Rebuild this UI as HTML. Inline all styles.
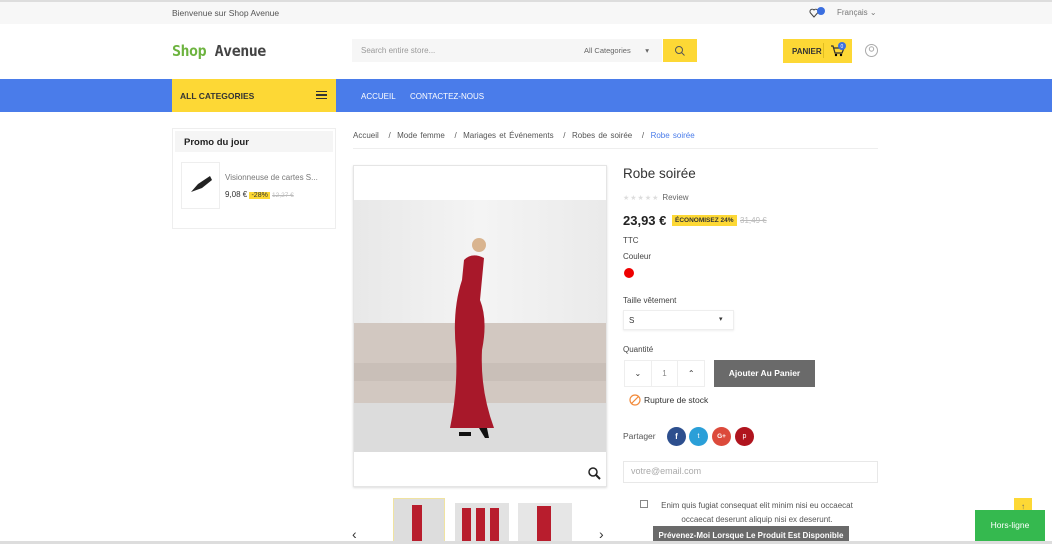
<!DOCTYPE html>
<html><head><meta charset="utf-8"><style>
*{margin:0;padding:0;box-sizing:border-box}
body{width:1052px;height:544px;overflow:hidden;background:#fff;font-family:"Liberation Sans",sans-serif;color:#333;position:relative;font-size:9px}
.a{position:absolute}
</style></head><body>
<div class="a" style="left:0;top:0;width:1052px;height:2px;background:#ddd"></div>
<div class="a" style="left:0;top:2px;width:1052px;height:22px;background:#f7f7f7"></div>
<div class="a" style="left:172px;top:8px;font-size:8.5px;color:#555">Bienvenue sur Shop Avenue</div>
<svg class="a" style="left:809px;top:7px" width="18" height="12"><path d="M5 10 L1.5 6 A2.2 2.2 0 0 1 5 3 A2.2 2.2 0 0 1 8.5 6Z" fill="none" stroke="#444" stroke-width="1"/><circle cx="12" cy="4" r="4" fill="#3b6fe0"/></svg>
<div class="a" style="left:837px;top:8px;font-size:8px;color:#777">Français ⌄</div>
<div class="a" style="left:172px;top:42px;font-size:15px;font-weight:bold;font-family:'DejaVu Sans Mono',monospace;letter-spacing:-0.5px"><span style="color:#6cb33e">Shop</span> <span style="color:#444">Avenue</span></div>
<div class="a" style="left:352px;top:39px;width:310px;height:23px;background:#f6f6f6"></div>
<div class="a" style="left:361px;top:46px;font-size:8px;color:#999">Search entire store...</div>
<div class="a" style="left:584px;top:46px;font-size:7.5px;color:#666">All Categories &nbsp;&nbsp;&nbsp;&nbsp;&nbsp; ▾</div>
<div class="a" style="left:663px;top:39px;width:34px;height:23px;background:#fdd835"></div>
<svg class="a" style="left:674px;top:45px" width="12" height="12"><circle cx="5" cy="5" r="3.5" fill="none" stroke="#555"/><path d="M7.5 7.5 L10.5 10.5" stroke="#555"/></svg>
<div class="a" style="left:783px;top:39px;width:69px;height:24px;background:#fdd835"></div>
<div class="a" style="left:792px;top:47px;font-size:8px;font-weight:bold;color:#333">PANIER</div>
<div class="a" style="left:823px;top:43px;width:1px;height:15px;background:#e0bd20"></div>
<svg class="a" style="left:829px;top:41px" width="20" height="18"><path d="M2 5h2l2 7h7l2-5H5" fill="none" stroke="#333" stroke-width="1.2"/><circle cx="7" cy="14" r="1.2"/><circle cx="12" cy="14" r="1.2"/><circle cx="13" cy="5" r="4" fill="#3b6fe0"/><text x="11.5" y="7" font-size="5" fill="#fff">0</text></svg>
<svg class="a" style="left:864px;top:43px" width="15" height="15"><circle cx="7.5" cy="7.5" r="6" fill="none" stroke="#aaa"/><circle cx="7.5" cy="6" r="2.2" fill="none" stroke="#aaa"/></svg>
<div class="a" style="left:0;top:79px;width:1052px;height:33px;background:#4a7cea"></div>
<div class="a" style="left:172px;top:79px;width:164px;height:33px;background:#fdd835"></div>
<div class="a" style="left:180px;top:91px;font-size:8.5px;font-weight:bold;color:#333">ALL CATEGORIES</div>
<div class="a" style="left:316px;top:91px;width:11px;height:8px;border-top:1.5px solid #333;border-bottom:1.5px solid #333"><div style="margin-top:2px;height:1.5px;background:#333"></div></div>
<div class="a" style="left:361px;top:92px;font-size:8px;color:#fff">ACCUEIL</div>
<div class="a" style="left:410px;top:92px;font-size:8px;color:#fff">CONTACTEZ-NOUS</div>
<div class="a" style="left:172px;top:128px;width:164px;height:101px;border:1px solid #eee"></div>
<div class="a" style="left:175px;top:131px;width:158px;height:21px;background:#f5f5f5"></div>
<div class="a" style="left:184px;top:137px;font-size:9.5px;font-weight:bold;color:#222">Promo du jour</div>
<div class="a" style="left:181px;top:162px;width:39px;height:47px;border:1px solid #eee"></div>
<svg class="a" style="left:188px;top:172px" width="26" height="24"><path d="M3 20 L10 12 L22 4 L24 8 L14 16 Z" fill="#222"/></svg>
<div class="a" style="left:225px;top:173px;font-size:8px;color:#777">Visionneuse de cartes S...</div>
<div class="a" style="left:225px;top:190px;font-size:8px;color:#333">9,08 € <span style="background:#fdd835;padding:0 2px;font-size:7px">-28%</span> <span style="color:#bbb;font-size:6.5px;text-decoration:line-through">12,27 €</span></div>
<div class="a" style="left:353px;top:131px;font-size:8px;color:#555;word-spacing:1px">Accueil &nbsp; / &nbsp;Mode femme &nbsp; / &nbsp;Mariages et Événements &nbsp; / &nbsp;Robes de soirée &nbsp; / &nbsp;<span style="color:#4a7cea">Robe soirée</span></div>
<div class="a" style="left:353px;top:148px;width:525px;height:1px;background:#eee"></div>
<div class="a" style="left:353px;top:165px;width:254px;height:322px;border:1px solid #e5e5e5;box-shadow:0 1px 2px #ddd"></div>
<svg class="a" style="left:354px;top:200px" width="252" height="252">
<defs><linearGradient id="w" x1="0" x2="1"><stop offset="0" stop-color="#e8e8e8"/><stop offset=".5" stop-color="#f4f4f4"/><stop offset="1" stop-color="#eaeaea"/></linearGradient></defs>
<rect width="252" height="252" fill="url(#w)"/>
<rect x="0" y="123" width="252" height="80" fill="#d2c8c1"/>
<rect x="0" y="163" width="252" height="18" fill="#c9bfb8"/>
<rect x="0" y="203" width="252" height="49" fill="#dcdcdc"/>
<path d="M110 60 Q118 52 130 58 L126 100 Q134 120 128 150 Q126 190 140 228 L96 228 Q104 190 102 150 Q98 110 108 80 Z" fill="#a8182a"/>
<circle cx="125" cy="45" r="7" fill="#d9b48f"/>
<path d="M105 232 h12 v4 h-12z M125 228 h8 l2 10 h-4z" fill="#111"/>
</svg>
<svg class="a" style="left:587px;top:466px" width="14" height="14"><circle cx="6" cy="6" r="4" fill="none" stroke="#222" stroke-width="1.5"/><path d="M9 9 L13 13" stroke="#222" stroke-width="2"/></svg>
<div class="a" style="left:393px;top:498px;width:52px;height:46px;border:1px solid #f0e3a0;background:#ddd"></div>
<div class="a" style="left:455px;top:503px;width:54px;height:41px;background:#e2e2e2"></div>
<div class="a" style="left:518px;top:503px;width:54px;height:41px;background:#e6e6e6"></div>
<div class="a" style="left:412px;top:505px;width:10px;height:39px;background:#b81d2d"></div>
<div class="a" style="left:462px;top:508px;width:40px;height:36px;background:repeating-linear-gradient(90deg,#b81d2d 0 9px,#e2e2e2 9px 14px)"></div>
<div class="a" style="left:537px;top:506px;width:14px;height:38px;background:#b81d2d"></div>
<div class="a" style="left:352px;top:526px;font-size:14px;color:#333">‹</div>
<div class="a" style="left:599px;top:526px;font-size:14px;color:#333">›</div>
<div class="a" style="left:623px;top:166px;font-size:13.5px;color:#333">Robe soirée</div>
<div class="a" style="left:623px;top:193px;font-size:7px;color:#ddd;letter-spacing:1px">★★★★★ <span style="color:#666;font-size:8px;letter-spacing:0">Review</span></div>
<div class="a" style="left:623px;top:213px;font-size:13px;font-weight:bold;color:#222">23,93 €</div>
<div class="a" style="left:672px;top:215px;font-size:6.5px;font-weight:bold;background:#fdd835;padding:2px 3px">ÉCONOMISEZ 24%</div>
<div class="a" style="left:740px;top:216px;font-size:8px;color:#bbb;text-decoration:line-through">31,49 €</div>
<div class="a" style="left:623px;top:236px;font-size:8px;color:#444">TTC</div>
<div class="a" style="left:623px;top:252px;font-size:8px;color:#444">Couleur</div>
<div class="a" style="left:624px;top:268px;width:10px;height:10px;border-radius:50%;background:#e00"></div>
<div class="a" style="left:623px;top:296px;font-size:8px;color:#444">Taille vêtement</div>
<div class="a" style="left:623px;top:310px;width:111px;height:20px;border:1px solid #eee;box-shadow:0 1px 2px #eee"></div>
<div class="a" style="left:629px;top:316px;font-size:8px">S</div>
<div class="a" style="left:719px;top:315px;font-size:7px">▾</div>
<div class="a" style="left:623px;top:345px;font-size:8px;color:#444">Quantité</div>
<div class="a" style="left:624px;top:360px;width:81px;height:27px;border:1px solid #eee;display:flex"><div style="flex:1;border-right:1px solid #eee;text-align:center;line-height:26px;font-size:8px">⌄</div><div style="flex:1;border-right:1px solid #eee;text-align:center;line-height:26px;font-size:8px;color:#888">1</div><div style="flex:1;text-align:center;line-height:26px;font-size:8px">⌃</div></div>
<div class="a" style="left:714px;top:360px;width:101px;height:27px;background:#6a6a6a;color:#fff;font-size:8.5px;font-weight:bold;text-align:center;line-height:27px">Ajouter Au Panier</div>
<svg class="a" style="left:629px;top:394px" width="12" height="12"><circle cx="6" cy="6" r="5" fill="none" stroke="#f28a3a" stroke-width="1.2"/><path d="M2.5 9.5 L9.5 2.5" stroke="#f28a3a" stroke-width="1.2"/></svg>
<div class="a" style="left:644px;top:395px;font-size:8.5px;color:#333">Rupture de stock</div>
<div class="a" style="left:623px;top:431px;font-size:8.5px;color:#555">Partager</div>
<div class="a" style="left:667px;top:427px;width:19px;height:19px;border-radius:50%;background:#2d4f8e;color:#fff;font-size:8px;text-align:center;line-height:19px;font-weight:bold">f</div>
<div class="a" style="left:689px;top:427px;width:19px;height:19px;border-radius:50%;background:#2a9fd8;color:#fff;font-size:7px;text-align:center;line-height:19px">t</div>
<div class="a" style="left:712px;top:427px;width:19px;height:19px;border-radius:50%;background:#dc4a3b;color:#fff;font-size:6.5px;text-align:center;line-height:19px;font-weight:bold">G+</div>
<div class="a" style="left:735px;top:427px;width:19px;height:19px;border-radius:50%;background:#b0141e;color:#fff;font-size:7px;text-align:center;line-height:19px">p</div>
<div class="a" style="left:623px;top:461px;width:255px;height:22px;border:1px solid #e8e8e8"></div>
<div class="a" style="left:631px;top:466px;font-size:9px;color:#aaa">votre@email.com</div>
<div class="a" style="left:640px;top:500px;width:8px;height:8px;border:1px solid #888"></div>
<div class="a" style="left:652px;top:499px;font-size:8px;color:#555;line-height:14px;text-align:center;width:210px">Enim quis fugiat consequat elit minim nisi eu occaecat occaecat deserunt aliquip nisi ex deserunt.</div>
<div class="a" style="left:653px;top:526px;width:196px;height:18px;background:#6a6a6a;color:#fff;font-size:8px;text-align:center;line-height:19px;font-weight:bold">Prévenez-Moi Lorsque Le Produit Est Disponible</div>
<div class="a" style="left:1014px;top:498px;width:18px;height:18px;background:#fdd835;font-size:8px;text-align:center;line-height:18px;color:#666">↑</div>
<div class="a" style="left:975px;top:510px;width:70px;height:34px;background:#35b94f;color:#fff;font-size:8.5px;text-align:center;line-height:30px">Hors-ligne</div>
<div class="a" style="left:0;top:541px;width:1052px;height:3px;background:#ddd"></div>
</body></html>
